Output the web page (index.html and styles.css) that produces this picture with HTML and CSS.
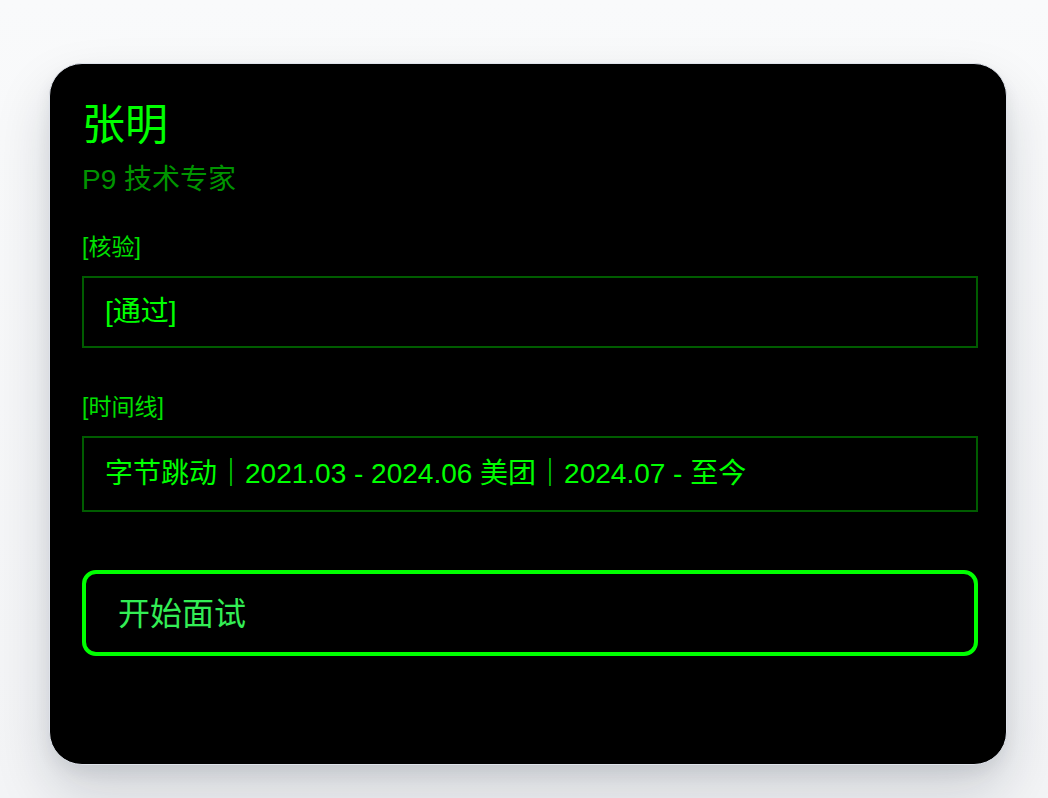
FILE: index.html
```html
<!DOCTYPE html>
<html lang="zh-CN">
<head>
<meta charset="utf-8">
<link rel="stylesheet" href="styles.css">
</head>
<body>
<div class="page">
  <section class="card">
    <h1 class="name">张明</h1>
    <div class="title">P9 技术专家</div>
    <div class="label label-first">[核验]</div>
    <div class="box box-verify">[通过]</div>
    <div class="label">[时间线]</div>
    <div class="box box-timeline">字节跳动｜2021.03 - 2024.06 美团｜2024.07 - 至今</div>
    <button class="start">开始面试</button>
  </section>
</div>
</body>
</html>
```
FILE: styles.css
```css
* { box-sizing: border-box; }
html, body { margin: 0; height: 100%; }
body {
  background: linear-gradient(180deg, #f9fafb 0%, #f3f4f6 100%);
  font-family: "Liberation Sans", "Noto Sans CJK SC", sans-serif;
}
.page {
  padding: 63px 42px 0 49px;
}
.card {
  width: 958px;
  height: 702px;
  background: #000;
  border: 1px solid #dfe3eb;
  border-radius: 33px;
  padding: 36px 28px 0 32px;
  display: flex;
  flex-direction: column;
  box-shadow: 0 28px 56px rgba(15, 23, 42, 0.16), 0 8px 16px rgba(15, 23, 42, 0.07);
}
.name {
  margin: 0;
  font-weight: normal;
  font-size: 43px;
  line-height: 50px;
  color: #00ff00;
}
.title {
  margin-top: 12px;
  font-size: 28px;
  line-height: 36px;
  color: #009400;
}
.label {
  margin-top: 43px;
  font-size: 23px;
  line-height: 32px;
  color: #00e000;
}
.label-first { margin-top: 33px; }
.box {
  margin-top: 13px;
  border: 2px solid #005c00;
  font-size: 28px;
  line-height: 36px;
  color: #00ff00;
  padding: 16px 21px;
}
.box-timeline { padding: 18px 21px; }
.start {
  margin-top: 58px;
  background: #000;
  border: 4px solid #00ff00;
  border-radius: 14px;
  font-family: inherit;
  font-size: 32px;
  line-height: 38px;
  color: #33ee55;
  text-align: left;
  padding: 21px 32px 19px;
}
```
